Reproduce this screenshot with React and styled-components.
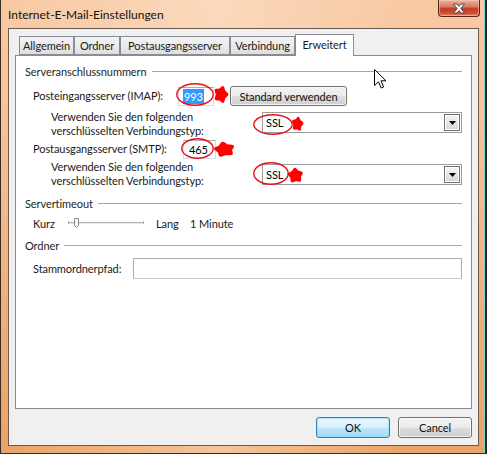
import React from "react";
import styled, { createGlobalStyle } from "styled-components";

const FONT = `Lato, "Noto Sans", Arial, sans-serif`;

const Global = createGlobalStyle`
  html, body { margin: 0; padding: 0; }
  body { width: 487px; height: 454px; overflow: hidden; background: #2a2220; }
`;

const Window = styled.div`
  position: relative;
  width: 487px;
  height: 454px;
  box-sizing: border-box;
  display: flex;
  flex-direction: column;
  border-left: 1px solid #3b2c22;
  border-right: 2px solid #2c2620;
  border-bottom: 1px solid #3b2c22;
  background:
    linear-gradient(90deg, rgba(255,255,255,0) 0%, rgba(255,236,218,0.45) 45%, rgba(255,255,255,0) 85%),
    linear-gradient(180deg, #f8c9a3 0%, #f6c39b 25%, #efae7a 70%, #e9a368 100%);
  box-shadow: inset -1px 0 0 #7fd0d0;
  font-family: ${FONT};
  font-size: 11px;
  letter-spacing: -0.08px;
  color: #000;
`;

const TitleBar = styled.div`
  height: 28px;
  flex: none;
  display: flex;
  align-items: center;
  padding-left: 7px;
`;

const Title = styled.div`
  flex: 1;
  font-size: 12px;
  letter-spacing: 0;
  color: #111;
`;

const CloseButton = styled.div`
  align-self: flex-start;
  width: 42px;
  height: 17px;
  margin-right: 5px;
  box-sizing: border-box;
  border: 1px solid #5a2418;
  border-top: none;
  border-radius: 0 0 4px 4px;
  background: linear-gradient(180deg, #eab2a0 0%, #d8806a 40%, #c2391f 55%, #d0553a 85%, #e6896a 100%);
  display: flex;
  align-items: center;
  justify-content: center;
  box-shadow: inset 0 0 0 1px rgba(255, 210, 190, 0.5);
`;

const Client = styled.div`
  flex: 1;
  margin: 0 6px 7px 7px;
  border: 1px solid #6b5a4c;
  background: #f0f0f0;
  display: flex;
  flex-direction: column;
  padding: 5px 6px 7px 6px;
  min-height: 0;
`;

const TabStrip = styled.div`
  height: 21px;
  flex: none;
  display: flex;
  align-items: flex-end;
  padding-left: 4px;
`;

const Tab = styled.div`
  box-sizing: border-box;
  width: ${(p) => p.$w}px;
  height: ${(p) => (p.$active ? 22 : 19)}px;
  margin-bottom: ${(p) => (p.$active ? -1 : 0)}px;
  position: relative;
  z-index: ${(p) => (p.$active ? 1 : 0)};
  border: 1px solid #898c95;
  border-bottom: ${(p) => (p.$active ? "none" : "1px solid #898c95")};
  background: ${(p) =>
    p.$active ? "#ffffff" : "linear-gradient(180deg, #f3f3f3 0%, #ebebeb 50%, #dedede 100%)"};
  display: flex;
  align-items: ${(p) => (p.$active ? "flex-start" : "center")};
  padding-top: ${(p) => (p.$active ? 3 : 0)}px;
  justify-content: center;
  white-space: nowrap;
  color: #1a1a1a;
`;

const Panel = styled.div`
  flex: 1;
  border: 1px solid #898c95;
  background: #ffffff;
  padding: 7px 9px 0 9px;
  display: flex;
  flex-direction: column;
  min-height: 0;
`;

const GroupHeader = styled.div`
  margin-top: ${(p) => p.$mt}px;
  height: 16px;
  display: flex;
  align-items: center;
  color: #1e1e1e;
  white-space: nowrap;
`;

const GroupLine = styled.div`
  flex: 1;
  height: 1px;
  margin-left: 5px;
  background: #a8a8a8;
`;

const Row = styled.div`
  margin-top: ${(p) => p.$mt}px;
  height: ${(p) => p.$h || 20}px;
  display: flex;
  align-items: ${(p) => (p.$top ? "flex-start" : "center")};
  padding-left: ${(p) => p.$indent || 8}px;
  white-space: nowrap;
`;

const Label = styled.div`
  width: ${(p) => p.$w}px;
  flex: none;
  line-height: 14px;
  color: #1a1a1a;
`;

const PortInput = styled.div`
  box-sizing: border-box;
  width: ${(p) => p.$w || 36}px;
  height: 19px;
  border: 1px solid #abadb3;
  border-bottom-color: #dadde3;
  border-left-color: #d6d9df;
  border-right-color: #d6d9df;
  background: #fff;
  padding-left: ${(p) => p.$pl || 4}px;
  display: flex;
  align-items: center;
`;

const Selected = styled.span`
  background: #3399ff;
  color: #fff;
  padding: 0 1px;
  line-height: 15px;
`;

const TextInput = styled.div`
  box-sizing: border-box;
  flex: 1;
  height: 21px;
  border: 1px solid #abadb3;
  border-bottom-color: #c9ccd2;
  background: #fff;
`;

const PushButton = styled.div`
  box-sizing: border-box;
  width: ${(p) => p.$w}px;
  height: ${(p) => p.$h || 20}px;
  margin-left: ${(p) => p.$ml || 0}px;
  border: 1px solid ${(p) => (p.$default ? "#3c7fb1" : "#707070")};
  border-radius: 3px;
  background: ${(p) =>
    p.$default
      ? "linear-gradient(180deg, #eaf6fd 0%, #d9f0fc 50%, #bee6fd 51%, #a7d9f5 100%)"
      : "linear-gradient(180deg, #f2f2f2 0%, #ebebeb 50%, #dddddd 51%, #cfcfcf 100%)"};
  box-shadow: inset 0 0 0 1px ${(p) => (p.$default ? "rgba(120,220,250,0.55)" : "rgba(255,255,255,0.7)")};
  display: flex;
  align-items: center;
  justify-content: center;
  color: #111;
  white-space: nowrap;
`;

const Combo = styled.div`
  box-sizing: border-box;
  flex: 1;
  height: 21px;
  margin-top: ${(p) => p.$mt}px;
  border: 1px solid #9c9c9c;
  background: #fff;
  display: flex;
  align-items: center;
  padding: 0 1px 0 3px;
`;

const ComboText = styled.div`
  flex: 1;
`;

const ComboArrow = styled.div`
  box-sizing: border-box;
  width: 16px;
  height: 17px;
  border: 1px solid #6f6f6f;
  background: linear-gradient(180deg, #f4f4f4 0%, #e6e6e6 50%, #d6d6d6 100%);
  box-shadow: inset 0 0 0 1px #ffffff;
  display: flex;
  align-items: center;
  justify-content: center;
`;

const SmallText = styled.div`
  width: ${(p) => p.$w}px;
  margin-left: ${(p) => p.$ml || 0}px;
  flex: none;
  color: #1a1a1a;
`;

const Footer = styled.div`
  flex: none;
  height: 21px;
  margin-top: 8px;
  display: flex;
  justify-content: flex-end;
  gap: 8px;
`;

const Overlay = styled.svg`
  position: absolute;
  left: ${(p) => p.$x - 1}px;
  top: ${(p) => p.$y}px;
  overflow: visible;
  pointer-events: none;
`;

function starPoints(cx, cy, ro, ri, n, rot) {
  const pts = [];
  for (let i = 0; i < n * 2; i++) {
    const r = i % 2 === 0 ? ro : ri;
    const a = rot + (Math.PI * i) / n;
    pts.push(`${(cx + r * Math.sin(a)).toFixed(2)},${(cy - r * Math.cos(a)).toFixed(2)}`);
  }
  return pts.join(" ");
}

const Ellipse = ({ x, y, w, h }) => (
  <Overlay $x={x} $y={y} width={w} height={h}>
    <ellipse cx={w / 2} cy={h / 2} rx={w / 2 - 0.8} ry={h / 2 - 0.8} fill="none" stroke="#e8101a" strokeWidth="1.4" />
  </Overlay>
);

const Star = ({ x, y, w, h, rot = 0.2, n = 5 }) => (
  <Overlay $x={x} $y={y} width={w} height={h} viewBox="0 0 20 20" preserveAspectRatio="none">
    <polygon
      points={starPoints(10, 10, 7.2, 4.6, n, rot)}
      fill="#ff0000"
      stroke="#ff0000"
      strokeWidth="4"
      strokeLinejoin="round"
    />
  </Overlay>
);

const Cursor = () => (
  <Overlay $x={374} $y={69} width={13} height={20}>
    <path
      d="M0.5 0.5 L0.5 16.5 L4.5 12.8 L7.2 19 L9.6 18 L7 11.8 L12 11.8 Z"
      fill="#ffffff"
      stroke="#000000"
      strokeWidth="1"
      strokeLinejoin="miter"
    />
  </Overlay>
);

const Slider = () => (
  <svg width="76" height="12" viewBox="0 0 76 12" style={{ flex: "none" }}>
    <line x1="0.5" y1="5.5" x2="75.5" y2="5.5" stroke="#b4b4b4" />
    <line x1="0.5" y1="6.5" x2="75.5" y2="6.5" stroke="#e8e8e8" />
    <line x1="0.5" y1="4" x2="0.5" y2="7" stroke="#b4b4b4" />
    <line x1="75.5" y1="4" x2="75.5" y2="7" stroke="#b4b4b4" />
    <path d="M6.5 1.5 H10.5 V8.5 L8.5 10.5 L6.5 8.5 Z" fill="#f6f6f6" stroke="#8c8c8c" />
  </svg>
);

const Arrow = () => (
  <svg width="7" height="4" viewBox="0 0 7 4">
    <path d="M0 0 H7 L3.5 4 Z" fill="#000" />
  </svg>
);

const CloseX = () => (
  <svg width="14" height="11" viewBox="0 0 14 11">
    <path
      d="M1.5 1 H5 L7 3.4 L9 1 H12.5 L8.8 5.5 L12.5 10 H9 L7 7.6 L5 10 H1.5 L5.2 5.5 Z"
      fill="#ffffff"
      stroke="#4a3a36"
      strokeWidth="0.9"
      strokeLinejoin="round"
    />
  </svg>
);

const tabs = [
  { label: "Allgemein", w: 55 },
  { label: "Ordner", w: 46 },
  { label: "Postausgangsserver", w: 110 },
  { label: "Verbindung", w: 65 },
  { label: "Erweitert", w: 59, active: true },
];

export default function App() {
  return (
    <>
      <Global />
      <Window>
        <TitleBar>
          <Title>Internet-E-Mail-Einstellungen</Title>
          <CloseButton>
            <CloseX />
          </CloseButton>
        </TitleBar>
        <Client>
          <TabStrip>
            {tabs.map((t) => (
              <Tab key={t.label} $w={t.w} $active={t.active}>
                {t.label}
              </Tab>
            ))}
          </TabStrip>
          <Panel>
            <GroupHeader $mt={0}>
              Serveranschlussnummern
              <GroupLine />
            </GroupHeader>
            <Row $mt={7}>
              <Label $w={145}>Posteingangsserver (IMAP):</Label>
              <PortInput>
                <Selected>993</Selected>
              </PortInput>
              <PushButton $w={117} $ml={16}>
                Standard verwenden
              </PushButton>
            </Row>
            <Row $mt={4} $h={28} $indent={26} $top>
              <Label $w={211}>
                Verwenden Sie den folgenden
                <br />
                verschlüsselten Verbindungstyp:
              </Label>
              <Combo $mt={2}>
                <ComboText>SSL</ComboText>
                <ComboArrow>
                  <Arrow />
                </ComboArrow>
              </Combo>
            </Row>
            <Row $mt={1}>
              <Label $w={150}>Postausgangsserver (SMTP):</Label>
              <PortInput $w={33} $pl={5}>465</PortInput>
            </Row>
            <Row $mt={1} $h={28} $indent={26} $top>
              <Label $w={211}>
                Verwenden Sie den folgenden
                <br />
                verschlüsselten Verbindungstyp:
              </Label>
              <Combo $mt={4}>
                <ComboText>SSL</ComboText>
                <ComboArrow>
                  <Arrow />
                </ComboArrow>
              </Combo>
            </Row>
            <GroupHeader $mt={7}>
              Servertimeout
              <GroupLine />
            </GroupHeader>
            <Row $mt={4} $h={16}>
              <SmallText $w={35}>Kurz</SmallText>
              <Slider />
              <SmallText $w={34} $ml={12}>
                Lang
              </SmallText>
              <SmallText $w={60}>1 Minute</SmallText>
            </Row>
            <GroupHeader $mt={6}>
              Ordner
              <GroupLine />
            </GroupHeader>
            <Row $mt={5} $h={21}>
              <Label $w={100}>Stammordnerpfad:</Label>
              <TextInput />
            </Row>
          </Panel>
          <Footer>
            <PushButton $w={74} $h={21} $default>
              OK
            </PushButton>
            <PushButton $w={74} $h={21}>
              Cancel
            </PushButton>
          </Footer>
        </Client>

        <Ellipse x={176} y={83} w={38} h={23} />
        <Star x={213} y={85} w={16} h={19} rot={0.3} />
        <Ellipse x={181} y={138} w={33} h={21} />
        <Star x={213} y={141} w={23} h={17} rot={-0.2} />
        <Ellipse x={253} y={114} w={40} h={21} />
        <Star x={291} y={116} w={13} h={16} rot={0.15} />
        <Ellipse x={253} y={162} w={36} h={23} />
        <Star x={287} y={167} w={17} h={17} rot={-0.1} />
        <Cursor />
      </Window>
    </>
  );
}
